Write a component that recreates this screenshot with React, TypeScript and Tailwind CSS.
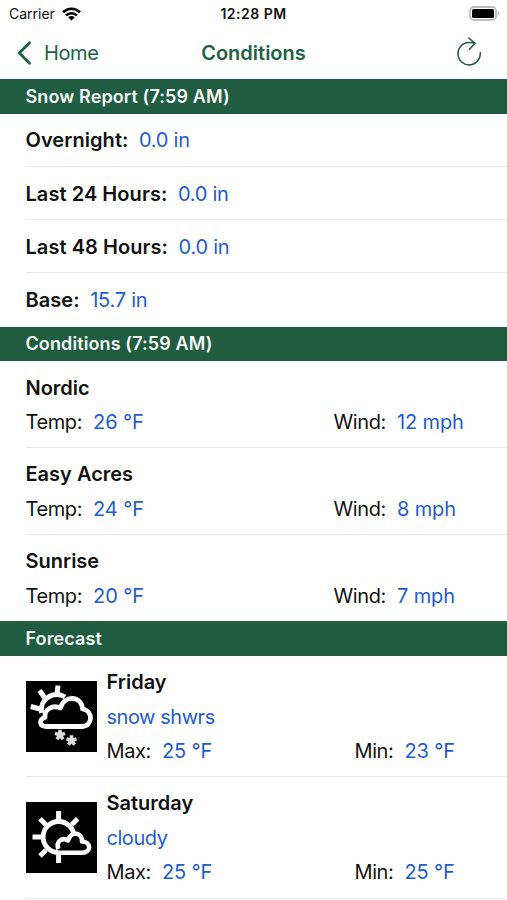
import { ReactNode } from "react";

const SNOW_REPORT = [
  { label: "Overnight:", value: "0.0 in" },
  { label: "Last 24 Hours:", value: "0.0 in" },
  { label: "Last 48 Hours:", value: "0.0 in" },
  { label: "Base:", value: "15.7 in" },
];

const STATIONS = [
  { name: "Nordic", temp: "26 °F", wind: "12 mph" },
  { name: "Easy Acres", temp: "24 °F", wind: "8 mph" },
  { name: "Sunrise", temp: "20 °F", wind: "7 mph" },
];

const FORECAST = [
  { day: "Friday", summary: "snow shwrs", max: "25 °F", min: "23 °F", icon: <SnowShowersIcon /> },
  { day: "Saturday", summary: "cloudy", max: "25 °F", min: "25 °F", icon: <CloudyIcon /> },
];

function SnowShowersIcon() {
  return (
    <svg viewBox="0 0 71 71" className="h-[71px] w-[71px] shrink-0 bg-black" fill="none" stroke="#fff">
      <path d="M32 4.500 31 13M13.500 9.500l5 7M4.800 25.500l9 2.500" strokeWidth="5" />
      <path d="M15.500 32A15.500 15.500 0 0 1 39 16" strokeWidth="5" />
      <path
        d="M21 45.500H55.500C67 45.500 67.500 30 56.500 28 55.500 14.500 38 13.500 34.500 27 27 23.500 18 28 19 36.500 12.500 38 13 45.500 21 45.500Z"
        fill="#000"
        strokeWidth="4.800"
        strokeLinejoin="round"
      />
      <g stroke="#ddd" strokeWidth="3.600">
        <path d="M34 54v-5.200M34 54l5-1.600M34 54l3.100 4.200M34 54l-3.100 4.200M34 54l-5-1.600" />
        <path d="M45.500 59.500v-5.200M45.500 59.500l5-1.600M45.500 59.500l3.100 4.200M45.500 59.500l-3.100 4.200M45.500 59.500l-5-1.600" />
      </g>
    </svg>
  );
}

function CloudyIcon() {
  return (
    <svg viewBox="0 0 71 71" className="h-[71px] w-[71px] shrink-0 bg-black" fill="none" stroke="#fff">
      <path d="M32.600 9v9M14 16.800l6 6M51.700 16.800l-6 6M6.500 35H17M14 54l6-6M32.600 50.500V61" strokeWidth="5" />
      <circle cx="32.600" cy="35" r="15.500" strokeWidth="4.800" />
      <path
        d="M33 50.700H56C65.500 50.500 65.500 40 56 39.500 56.500 30 45 28.500 42 38.500 36 34.500 29.500 40 32.500 47"
        fill="#000"
        strokeWidth="4.600"
        strokeLinejoin="round"
      />
    </svg>
  );
}

function StatusBar() {
  return (
    <div className="grid h-[27px] grid-cols-3 items-center px-[8px] text-sm leading-none">
      <div className="flex items-center gap-[7px] pl-px">
        <span>Carrier</span>
        <svg width="19" height="14" viewBox="0 0 19 14" fill="none" stroke="#000" strokeWidth="2.700">
          <path d="M1 5.200a12.200 12.200 0 0 1 17 0M4.100 8.400a7.800 7.800 0 0 1 10.800 0" />
          <path d="M9.500 13.500 6.300 10.400a4.600 4.600 0 0 1 6.400 0Z" fill="#000" stroke="none" />
        </svg>
      </div>
      <span className="text-center font-semibold tracking-[0.035em]">12:28 PM</span>
      <svg className="-mr-[0.500px] justify-self-end" width="31" height="15" viewBox="0 0 31 15">
        <rect x="1" y="1" width="26" height="13" rx="4" fill="#fff" stroke="#bdbdbd" strokeWidth="1.800" />
        <rect x="3" y="3" width="22" height="9" rx="1.500" fill="#000" />
        <path d="M28.700 5v5c2-1 2-4 0-5Z" fill="#bdbdbd" />
      </svg>
    </div>
  );
}

function NavBar() {
  return (
    <div className="grid h-[52px] grid-cols-3 items-center px-[17px] text-xl text-[#216245]">
      <button className="flex items-center gap-[13px]">
        <svg width="14" height="24" viewBox="0 0 14 24" fill="none" stroke="currentColor" strokeWidth="2.800" strokeLinecap="round" strokeLinejoin="round">
          <path d="M12.500 1.700 2.300 12l10.200 10.300" />
        </svg>
        <span className="tracking-[-0.020em]">Home</span>
      </button>
      <h1 className="text-center font-semibold">Conditions</h1>
      <button className="mr-[8px] -mt-[2px] justify-self-end">
        <svg width="25" height="30" viewBox="0 0 25 30" fill="none" stroke="currentColor" strokeWidth="1.600" strokeLinecap="round" strokeLinejoin="round">
          <path d="M23.300 15.800A11.200 11.200 0 1 1 12 5.500Q15 5.300 18 6.300" />
          <path d="M11.800 1 18 6.300l-5.500 6" />
        </svg>
      </button>
    </div>
  );
}

function SectionHeader({ children }: { children: ReactNode }) {
  return (
    <h2 className="flex h-[34.500px] items-center bg-[#205c41] pt-px pl-[25.500px] text-lg font-semibold tracking-[0.006em] text-[#f4f8f5]">
      {children}
    </h2>
  );
}

function Reading({ label, value }: { label: string; value: string }) {
  return (
    <div className="flex gap-[11px]">
      <span className="tracking-[-0.020em]">{label}</span>
      <span className="tracking-[-0.005em] text-[#1f5cd0]">{value}</span>
    </div>
  );
}

export default function App() {
  return (
    <main className="h-[900px] w-[507px] overflow-hidden bg-white font-['Inter',sans-serif] text-xl text-[#111]">
      <StatusBar />
      <NavBar />

      <SectionHeader>Snow Report (7:59 AM)</SectionHeader>
      <ul className="pl-[25.500px]">
        {SNOW_REPORT.map(({ label, value }) => (
          <li key={label} className="flex h-[53.300px] items-center gap-[10.500px] border-b border-[#e8e8e9] pt-[1.500px] last:border-0 last:pt-0">
            <span className="font-semibold tracking-[0.003em]">{label}</span>
            <span className="tracking-[-0.012em] text-[#1f5cd0]">{value}</span>
          </li>
        ))}
      </ul>

      <SectionHeader>Conditions (7:59 AM)</SectionHeader>
      <ul className="pl-[25.500px]">
        {STATIONS.map(({ name, temp, wind }) => (
          <li key={name} className="h-[86.700px] border-b border-[#e8e8e9] pt-[12.500px] last:border-0">
            <h3 className="mb-[6.500px] font-semibold">{name}</h3>
            <div className="grid grid-cols-[308px_1fr]">
              <Reading label="Temp:" value={temp} />
              <Reading label="Wind:" value={wind} />
            </div>
          </li>
        ))}
      </ul>

      <SectionHeader>Forecast</SectionHeader>
      <ul className="pl-[25.500px]">
        {FORECAST.map(({ day, summary, max, min, icon }) => (
          <li key={day} className="flex h-[121.500px] items-center gap-[10px] border-b border-[#e8e8e9]">
            {icon}
            <div className="flex-1">
              <h3 className="mb-[7px] font-semibold">{day}</h3>
              <p className="mb-[6px] tracking-[-0.023em] text-[#1f5cd0]">{summary}</p>
              <div className="grid grid-cols-[248px_1fr]">
                <Reading label="Max:" value={max} />
                <Reading label="Min:" value={min} />
              </div>
            </div>
          </li>
        ))}
      </ul>
    </main>
  );
}
